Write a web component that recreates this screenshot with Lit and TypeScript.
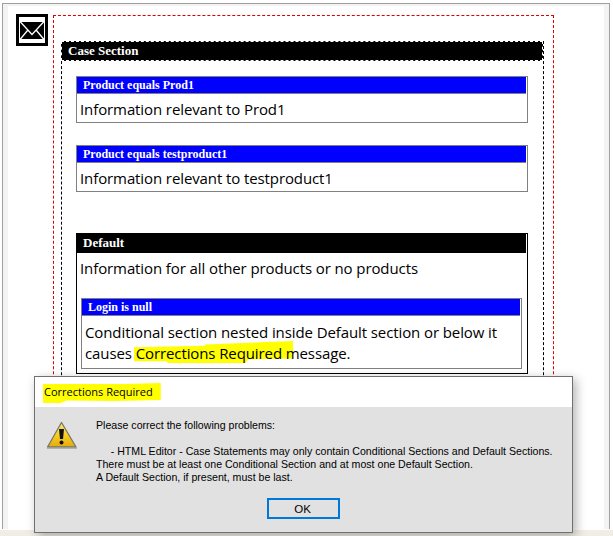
import { LitElement, html, css } from "lit";
import { customElement } from "lit/decorators.js";

@customElement("app-root")
export class AppRoot extends LitElement {
  static styles = css`
    :host { display: block; width: 613px; height: 536px; overflow: hidden; position: relative; background: #fff; font-family: "Open Sans", sans-serif; }
    .frame { box-sizing: border-box; margin: 3px 3px 0 2px; height: 526px; border: 1px solid #a0a0a0; border-bottom: none; padding: 2px 5px 0 5px; background: #f3f3f3; }
    .canvas { background: #fff; height: 100%; padding: 8px 0 0 8px; box-sizing: border-box; display: flex; gap: 5px; align-items: flex-start; overflow: hidden; }
    .mail { width: 32px; height: 32px; flex: none; display: block; }
    .red { margin-top: 1px; width: 501px; height: 560px; box-sizing: border-box; border: 1px dashed #e00000; padding: 25px 9px 0 7px; flex: none; }
    .case { border: 1px dashed #000; height: 540px; box-sizing: border-box; padding-left: 14px; padding-right: 15px; }
    .case-head { margin: -1px -15px 15px -15px; height: 20px; box-sizing: border-box; background: #000; border: 1px dashed #fff; color: #fff; font: bold 13px/18px "Liberation Serif", serif; padding-left: 6px; }
    .cond { border: 1px solid #808080; margin-bottom: 22px; }
    .cond.gap { margin-bottom: 41px; }
    .head { height: 16px; background: #00f; color: #fff; font: bold 12px/16px "Liberation Serif", serif; padding-left: 6px; margin: 0 1px 0 0; border-bottom: 1px solid #808080; }
    .body { font-size: 15px; letter-spacing: -0.1px; line-height: 25px; padding: 3px 0 0 3px; color: #000; }
    .def { border: 1px solid #000; height: 141px; box-sizing: border-box; }
    .def .black { height: 19px; background: #000; color: #fff; font: bold 13px/18px "Liberation Serif", serif; padding-left: 6px; margin-right: 1px; }
    .def .txt { font-size: 15px; letter-spacing: -0.1px; line-height: 29px; padding: 1px 0 0 3px; color: #000; margin-bottom: 15px; }
    .nested { margin: 0 5px 0 4px; border: 1px solid #808080; height: 71px; box-sizing: border-box; }
    .nested .msg { isolation: isolate; font-size: 15px; letter-spacing: -0.1px; line-height: 21px; padding: 6px 0 0 3px; color: #000; }
    .hl { position: relative; }
    .hl::before { content: ""; position: absolute; z-index: -1; background: #ffff00; }
    .msg .hl::before { left: -2px; right: -11px; top: -2px; bottom: 0; clip-path: polygon(0 28%, 45% 22%, 45% 16%, 100% 0, 100% 80%, 72% 84%, 70% 100%, 22% 100%, 20% 92%, 0 92%); }
    .dialog { position: absolute; left: 34px; top: 376px; width: 539px; height: 157px; box-sizing: border-box; border: 1px solid #707070; background: #e1e1e1; box-shadow: 3px 3px 10px rgba(0,0,0,.3); }
    .title { isolation: isolate; height: 30px; background: #fff; font: 11px/30px "Open Sans", sans-serif; padding-left: 9px; color: #000; }
    .title .hl::before { left: -1px; right: -8px; top: -1px; bottom: -4px; clip-path: polygon(0 5%, 70% 5%, 100% 0, 100% 85%, 60% 90%, 20% 88%, 15% 100%, 0 100%); }
    .content { display: flex; padding: 12px 0 0 9px; }
    .warn { width: 34px; height: 32px; flex: none; margin-top: 2px; }
    .text { margin-left: 18px; font: 10.6px/13px "Liberation Sans", sans-serif; color: #000; white-space: pre; }
    .text p { margin: 0; }
    .text p.first { margin-bottom: 13px; }
    .actions { display: flex; justify-content: center; margin-top: 14px; }
    .ok { width: 73px; height: 21px; box-sizing: border-box; border: 2px solid #0078d7; background: #e1e1e1; font: 11.5px/17px "Liberation Sans", sans-serif; padding: 1px 2px 0 0; text-align: center; color: #000; }
    .bottom { position: absolute; left: 0; right: 0; top: 530px; height: 6px; background: #f0eee4; }
  `;

  render() {
    return html`
      <div class="frame">
        <div class="canvas">
          <svg class="mail" viewBox="0 0 32 32">
            <rect x="1.5" y="1.5" width="29" height="29" fill="#fff" stroke="#000" stroke-width="3"/>
            <rect x="4" y="8" width="24" height="17" fill="#000"/>
            <path d="M4 7.5 L16 20.5 L28 7.5 M4 25.5 L11.5 16.5 M28 25.5 L20.5 16.5" fill="none" stroke="#fff" stroke-width="1.3"/>
          </svg>
          <div class="red">
            <div class="case">
              <div class="case-head">Case Section</div>
              <div class="cond">
                <div class="head">Product equals Prod1</div>
                <div class="body">Information relevant to Prod1</div>
              </div>
              <div class="cond gap">
                <div class="head">Product equals testproduct1</div>
                <div class="body">Information relevant to testproduct1</div>
              </div>
              <div class="def">
                <div class="black">Default</div>
                <div class="txt">Information for all other products or no products</div>
                <div class="nested">
                  <div class="head">Login is null</div>
                  <div class="msg">Conditional section nested inside Default section or below it causes <span class="hl">Corrections Required</span> message.</div>
                </div>
              </div>
            </div>
          </div>
        </div>
      </div>
      <div class="bottom"></div>
      <div class="dialog">
        <div class="title"><span class="hl">Corrections Required</span></div>
        <div class="content">
          <svg class="warn" viewBox="0 0 34 32">
            <defs><linearGradient id="w" x1="0" y1="0" x2="0" y2="1"><stop offset="0" stop-color="#fbe67a"/><stop offset="0.55" stop-color="#f6cc1e"/><stop offset="1" stop-color="#e5a90c"/></linearGradient></defs>
            <path d="M17.5 1.5 L32 26 L3.5 26 Z" fill="url(#w)" stroke="#77776a" stroke-width="1.3" stroke-linejoin="round"/>
            <path d="M3 27 H33" stroke="#a0a0a0" stroke-width="1.4"/>
            <path d="M15 8 H20 L19 18 H16 Z" fill="#111"/>
            <circle cx="17.5" cy="21.5" r="2" fill="#111"/>
          </svg>
          <div class="text"><p class="first">Please correct the following problems:</p><p>     - HTML Editor - Case Statements may only contain Conditional Sections and Default Sections.</p><p>There must be at least one Conditional Section and at most one Default Section.</p><p>A Default Section, if present, must be last.</p></div>
        </div>
        <div class="actions"><button class="ok">OK</button></div>
      </div>
    `;
  }
}
